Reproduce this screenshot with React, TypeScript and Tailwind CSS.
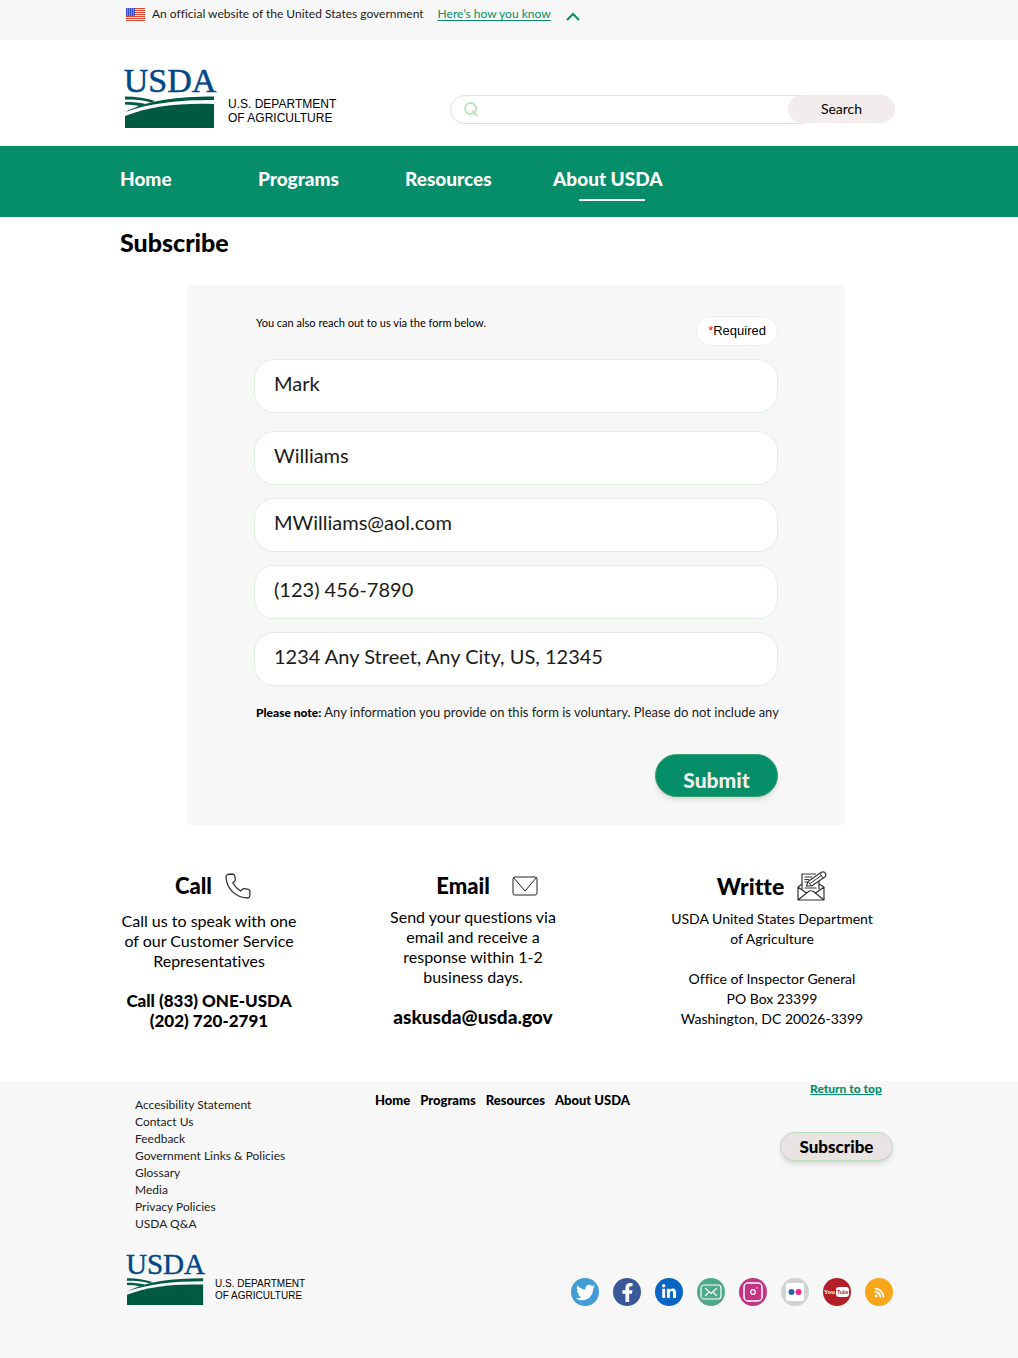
import type { ReactNode } from 'react';
import { FaTwitter, FaFacebookF, FaLinkedinIn, FaRss } from 'react-icons/fa';

function Flag() {
  return (
    <svg width="19" height="13" viewBox="0 0 19 13" aria-hidden="true">
      <rect width="19" height="13" fill="#f8e4df" />
      {[0, 2, 4, 6, 8, 10, 12].map((y) => (
        <rect key={y} y={y} width="19" height="1" fill="#e0492f" />
      ))}
      <rect width="9" height="8" fill="#3a4fc4" />
      {[1, 3, 5, 7].map((y) =>
        [1, 3, 5, 7].map((x) => <rect key={`${x}-${y}`} x={x} y={y - 0.5} width="1" height="1" fill="#b5bff0" />),
      )}
    </svg>
  );
}

function UsdaMark({ className }: { className: string }) {
  return (
    <svg className={className} viewBox="0 0 90 63" role="img" aria-label="USDA">
      <text x="45" y="26" textAnchor="middle" fontFamily='"Liberation Serif", serif' fontSize="34" fill="#004785" stroke="#004785" strokeWidth="0.5">
        USDA
      </text>
      <path d="M0 30.500 C11 30.500 21 32 30 35 L26 36.500 C19 34 10 33.500 0 33.500 Z" fill="#005941" />
      <path d="M0 36 C8 36 14 36.500 21 38 L15 40 C10 39 5 38.500 0 38.500 Z" fill="#005941" />
      <path d="M0 46 C24 34 52 30.500 89 30.500 L89 34 C52 34 26 37 0 46 Z" fill="#005941" />
      <path d="M0 50 C26 40 54 37 89 38 L89 62 L0 62 Z" fill="#005941" />
    </svg>
  );
}

function PhoneIcon() {
  return (
    <svg width="26" height="26" viewBox="0 0 26 26" fill="none" stroke="#333" strokeWidth="1.300" strokeLinejoin="round" aria-hidden="true">
      <path d="M2.500 1.500 L7.500 1 Q9.500 1 9.800 3 L10.300 6 Q10.400 7.300 9.500 8.200 L7.800 9.800 Q10.500 15 15.500 18 L17.500 16.200 Q18.300 15.500 19.500 15.700 L23.500 16.400 Q25 16.800 25 18.500 L24.700 23 Q24.500 25 22.500 25 C10.500 24.500 1.500 15.500 1 4 Q1 2 2.500 1.500 Z" />
    </svg>
  );
}

function EnvelopeIcon() {
  return (
    <svg width="26" height="20" viewBox="0 0 26 20" fill="none" stroke="#222" aria-hidden="true">
      <rect x="1" y="1" width="24" height="18" rx="2" />
      <path d="M1.500 1.500 L13 15 L24.500 1.500" />
    </svg>
  );
}

function LetterIcon() {
  return (
    <svg width="30" height="30" viewBox="0 0 30 30" fill="none" stroke="#333" strokeWidth="1.200" strokeLinejoin="round" aria-hidden="true">
      <path d="M5 18.500 V3 H19 M22 10 V18.500" />
      <path d="M1 16 L5 13 M22 13 L27 16 M1 16 V29 H27 V16 M1 16 L10 22.500 M27 16 L18 22.500 M1 29 L11.500 20.500 Q14 19 16.500 20.500 L27 29" />
      <path d="M7.500 6 H15 M7.500 8.500 H12 M7.500 11 H10 M7.500 17 H19.500" strokeWidth="1" />
      <path d="M9.500 15 L11 10.500 L24 1.500 Q27 0 28.500 2.500 Q29.500 5 27.500 6.200 L14.500 15 Z" fill="#fff" />
      <path d="M11 10.500 L14.500 15 M23 2.500 L26 7 M13 12.500 L24.500 4.500" strokeWidth="1" />
    </svg>
  );
}

function Social({ label, className, children }: { label: string; className: string; children: ReactNode }) {
  return (
    <a href="#" aria-label={label} className={`flex size-7 items-center justify-center rounded-full text-white ${className}`}>
      {children}
    </a>
  );
}

const fields = [
  { label: 'First name', value: 'Mark', gap: 'mt-[13px]' },
  { label: 'Last name', value: 'Williams', gap: 'mt-[18px]' },
  { label: 'Email', value: 'MWilliams@aol.com', gap: 'mt-[13px]' },
  { label: 'Phone', value: '(123) 456-7890', gap: 'mt-[13px]' },
  { label: 'Address', value: '1234 Any Street, Any City, US, 12345', gap: 'mt-[13px]' },
];

const footerLinks = [
  'Accesibility Statement',
  'Contact Us',
  'Feedback',
  'Government Links & Policies',
  'Glossary',
  'Media',
  'Privacy Policies',
  'USDA Q&A',
];

export default function App() {
  return (
    <div className="bg-white font-['Lato',sans-serif] text-black [font-variant-ligatures:none]">
      <div className="h-10 bg-[#f7f7f7]">
        <div className="mx-auto flex max-w-[778px] items-center pt-1 pl-[6px] text-xs leading-5 text-[#1b1b1b]">
          <Flag />
          <span className="ml-[7px]">An official website of the United States government</span>
          <a href="#" className="ml-[14px] text-[#058e69] underline underline-offset-2">Here’s how you know</a>
          <svg className="ml-[15px] mt-1" width="14" height="9" viewBox="0 0 14 9" fill="none" stroke="#058e69" strokeWidth="2" aria-hidden="true">
            <path d="M1 8 L7 2 L13 8" />
          </svg>
        </div>
      </div>

      <header className="mx-auto flex h-[106px] max-w-[778px] items-start justify-between pr-[3px] pl-[5px]">
        <a href="#" className="mt-[26px] flex items-start">
          <UsdaMark className="h-[63px] w-[90px] overflow-visible" />
          <span className="mt-[31px] ml-[13px] font-['Liberation_Sans',sans-serif] text-xs leading-[14px]">
            U.S. DEPARTMENT<br />OF AGRICULTURE
          </span>
        </a>
        <form className="mt-[55px] flex w-[445px]" onSubmit={(e) => e.preventDefault()}>
          <label className="-mr-7 flex h-[29px] flex-1 items-center rounded-full border border-[#cfeccf] pl-3">
            <svg width="17" height="15" viewBox="0 0 17 15" fill="none" stroke="#bfe5c4" strokeWidth="2" aria-hidden="true">
              <circle cx="7.500" cy="6.500" r="5.500" />
              <path d="M9 9 L14.500 14" />
            </svg>
            <input type="search" aria-label="Search site" className="min-w-0 flex-1 bg-transparent px-2 text-sm outline-none" />
          </label>
          <button className="z-10 h-7 w-[107px] rounded-full bg-[#f2ecec] text-sm">Search</button>
        </form>
      </header>

      <nav className="bg-[#058e69]">
        <div className="mx-auto flex h-[71px] max-w-[778px] items-start pt-[21px] text-[19px] leading-6 font-black text-white">
          <a href="#" className="w-[138px]">Home</a>
          <a href="#" className="w-[147px]">Programs</a>
          <a href="#" className="w-[148px]">Resources</a>
          <a href="#" className="flex flex-col items-center">
            About USDA
            <span className="mt-2 ml-2 h-[2px] w-[66px] bg-white" />
          </a>
        </div>
      </nav>

      <main className="mx-auto max-w-[778px]">
        <h1 className="pt-[9px] text-[25px] leading-8 font-black">Subscribe</h1>

        <form className="mt-[27px] mr-[53px] ml-[67px] bg-[#f7f7f7] px-[67px] pt-[31px] pb-7" onSubmit={(e) => e.preventDefault()}>
          <div className="flex items-start justify-between">
            <p className="pl-[2px] text-[11px] leading-[14px]">You can also reach out to us via the form below.</p>
            <span className="rounded-full border border-[#e6f2e6] bg-white px-[11px] py-1 font-['Liberation_Sans',sans-serif] text-[13px] leading-5">
              <span className="text-[#e0102b]">*</span>Required
            </span>
          </div>
          {fields.map((f) => (
            <input
              key={f.label}
              aria-label={f.label}
              defaultValue={f.value}
              className={`block h-[54px] w-full rounded-[20px] border border-[#dcf0dc] bg-white px-[19px] pb-[6px] text-xl text-[#1b1b1b] outline-none ${f.gap}`}
            />
          ))}
          <p className="mt-4 pl-[2px] text-[13px] leading-5 whitespace-nowrap text-[#1b1b1b]">
            <strong className="text-xs font-black text-black">Please note:</strong> Any information you provide on this form is voluntary. Please do not include any
          </p>
          <div className="mt-8 flex justify-end">
            <button className="h-[43px] w-[123px] rounded-full border border-[#35a070] bg-[#058e69] pt-2 text-[21px] font-black text-[#f2ecec] shadow-md">
              Submit
            </button>
          </div>
        </form>

        <section className="mt-[46px] grid h-[210px] grid-cols-[178px_1fr_208px] pr-[22px] text-center">
          <div>
            <h2 className="flex items-center justify-center gap-[13px] pl-[8px] text-[22px] leading-[30px] font-black">Call <PhoneIcon /></h2>
            <p className="mt-[10px] text-base leading-5 whitespace-nowrap">
              Call us to speak with one<br />of our Customer Service<br />Representatives
            </p>
            <p className="mt-5 text-[17px] leading-5 font-black">Call (833) ONE-USDA<br />(202) 720-2791</p>
          </div>
          <div className="pr-5">
            <h2 className="flex items-center justify-center gap-[22px] pl-[28px] text-[22px] leading-[30px] font-black">Email <EnvelopeIcon /></h2>
            <p className="mt-[6px] text-base leading-5">
              Send your questions via<br />email and receive a<br />response within 1-2<br />business days.
            </p>
            <p className="mt-5 text-[19px] leading-5 font-black"><a href="mailto:askusda@usda.gov">askusda@usda.gov</a></p>
          </div>
          <div>
            <h2 className="flex items-center justify-center gap-[13px] text-[23px] leading-[30px] font-black">Writte <LetterIcon /></h2>
            <address className="mt-2 text-sm leading-5 whitespace-nowrap not-italic">
              USDA United States Department<br />of Agriculture<br /><br />Office of Inspector General<br />PO Box 23399<br />Washington, DC 20026-3399
            </address>
          </div>
        </section>
      </main>

      <footer className="bg-[#f7f7f7] pb-[52px]">
        <div className="mx-auto max-w-[778px]">
          <div className="grid grid-cols-[255px_1fr_118px] items-start">
            <ul className="pt-[15px] pl-[15px] text-xs leading-[17px] text-[#222]">
              {footerLinks.map((t) => (
                <li key={t}><a href="#">{t}</a></li>
              ))}
            </ul>
            <nav className="flex gap-[10px] pt-[11px] text-[13px] leading-4 font-black">
              <a href="#">Home</a>
              <a href="#">Programs</a>
              <a href="#">Resources</a>
              <a href="#">About USDA</a>
            </nav>
            <div className="flex flex-col items-start">
              <a href="#" className="ml-[30px] text-xs leading-4 font-black text-[#058e69] underline">Return to top</a>
              <button className="mt-[35px] h-[29px] w-[113px] rounded-full border border-[#b9dcb9] bg-[#e9e3e3] text-[17px] leading-5 font-black shadow-md">Subscribe</button>
            </div>
          </div>
          <div className="mt-5 flex items-start justify-between pr-[5px] pl-[7px]">
            <a href="#" className="flex items-start">
              <UsdaMark className="h-[54px] w-[77px] overflow-visible" />
              <span className="mt-[26px] ml-[11px] font-['Liberation_Sans',sans-serif] text-[10px] leading-3">
                U.S. DEPARTMENT<br />OF AGRICULTURE
              </span>
            </a>
            <div className="mt-[26px] flex gap-[14px]">
              <Social label="Twitter" className="bg-[#429cd6]"><FaTwitter size={19} /></Social>
              <Social label="Facebook" className="bg-[#3b5998]"><FaFacebookF size={19} /></Social>
              <Social label="LinkedIn" className="bg-[#0a66c2]"><FaLinkedinIn size={16} /></Social>
              <Social label="Email" className="bg-[#4fa986]">
                <svg width="22" height="16" viewBox="0 0 22 16" fill="none" stroke="#fff" strokeWidth="1.200">
                  <rect x="1" y="1" width="20" height="14" rx="3" />
                  <path d="M5 4 L11 9.500 L17 4 M5 12 L8.500 8.500 M17 12 L13.500 8.500" />
                </svg>
              </Social>
              <Social label="Instagram" className="bg-[#c13584]">
                <svg width="20" height="20" viewBox="0 0 20 20" fill="none" stroke="#fff" strokeWidth="1.500">
                  <rect x="1" y="1" width="18" height="18" rx="4" />
                  <circle cx="10" cy="10" r="2.300" strokeWidth="1.200" />
                  <circle cx="14" cy="6" r="0.700" fill="#fff" stroke="none" />
                </svg>
              </Social>
              <Social label="Flickr" className="bg-[#d1d2d4]">
                <svg width="18" height="18" viewBox="0 0 18 18">
                  <rect width="18" height="18" rx="2" fill="#fff" />
                  <circle cx="5.500" cy="9" r="3" fill="#2e62b0" />
                  <circle cx="12.500" cy="9" r="3" fill="#f0288c" />
                </svg>
              </Social>
              <Social label="YouTube" className="bg-[#b31f28]">
                <svg width="26" height="12" viewBox="0 0 26 12" fontFamily='"Liberation Sans", sans-serif' fontSize="6" fontWeight="700">
                  <text x="0" y="8" fill="#fff">You</text>
                  <rect x="12" y="1" width="13" height="10" rx="3" fill="#fff" />
                  <text x="13" y="8" fontSize="5" fill="#b31f28">Tube</text>
                </svg>
              </Social>
              <Social label="RSS" className="bg-[#faa61a]"><FaRss size={11} /></Social>
            </div>
          </div>
        </div>
      </footer>
    </div>
  );
}
